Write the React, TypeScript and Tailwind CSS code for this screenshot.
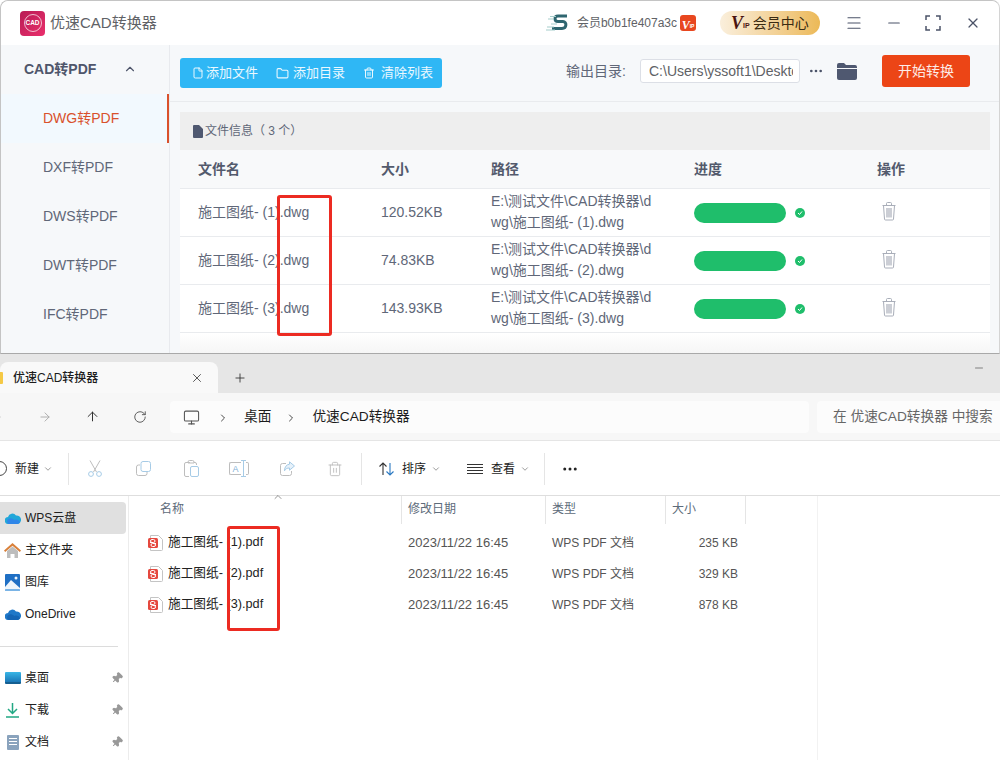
import {
  ArrowLeft, ArrowRight, ArrowUp, ChevronDown, ChevronRight, ChevronUp, Ellipsis, Folder, File, Menu, Minus, Monitor,
  Pin, Plus, RotateCw, Trash2, X,
} from "lucide-react";

const FONT = "font-['Liberation_Sans','Noto_Sans_CJK_SC',sans-serif]";

const NAV = ["DXF转PDF", "DWS转PDF", "DWT转PDF", "IFC转PDF"];

const FILES = [
  { name: "施工图纸- (1).dwg", size: "120.52KB", path: "wg\\施工图纸- (1).dwg" },
  { name: "施工图纸- (2).dwg", size: "74.83KB", path: "wg\\施工图纸- (2).dwg" },
  { name: "施工图纸- (3).dwg", size: "143.93KB", path: "wg\\施工图纸- (3).dwg" },
];

const PDFS = [
  { name: "施工图纸- (1).pdf", size: "235 KB" },
  { name: "施工图纸- (2).pdf", size: "329 KB" },
  { name: "施工图纸- (3).pdf", size: "878 KB" },
];

function CadLogo() {
  return (
    <div className="w-[25px] h-[25px] rounded-[4px] bg-gradient-to-br from-[#b81c55] to-[#ea2f6c] flex items-center justify-center shrink-0">
      <div className="w-[18px] h-[18px] rounded-full border border-white/70 flex items-center justify-center text-[6.5px] font-bold leading-none text-white">
        CAD
      </div>
    </div>
  );
}

function BrandMark() {
  return (
    <svg width="24" height="20" viewBox="0 0 24 20" className="shrink-0" fill="none">
      <path d="M21 3H12C8 3 8 8.500 12 8.500h5c4 0 4 7-1 7H6" stroke="#2f6670" strokeWidth="3" />
      <path d="M4 3.500h6M2 6h6M1 14h7M0 17h9M5 11h6" stroke="#a5cdcb" strokeWidth="1" />
    </svg>
  );
}

function TitleBar() {
  return (
    <div className="h-[44px] bg-white flex items-center pl-[19px] rounded-t-lg">
      <CadLogo />
      <span className="ml-[5px] text-[15px] text-[#606266]">优速CAD转换器</span>
      <div className="ml-auto flex items-center">
        <BrandMark />
        <span className="ml-[7px] text-xs text-[#606266]">会员b0b1fe407a3c</span>
        <div className="ml-[3px] w-4 h-4 rounded-[3px] bg-[#e8471f] text-white flex items-end justify-center leading-none">
          <span className="text-[12px] font-bold italic font-['Liberation_Serif',serif]">V</span>
          <span className="text-[5px] font-bold mb-[2px]">IP</span>
        </div>
        <div className="ml-[24px] w-[100px] h-6 rounded-full bg-gradient-to-r from-[#faefdc] to-[#ecb956] flex items-center pl-[11px] text-sm text-[#3a2a12]">
          <span className="font-['Liberation_Serif',serif] font-bold italic text-[18px] text-[#4a1410] leading-none">V</span>
          <span className="text-[7px] font-bold text-[#4a1410] mt-[6px] mr-[3px]">IP</span>
          会员中心
        </div>
        <Menu className="ml-[25px] w-[18px] h-[18px] text-[#4b5368]" strokeWidth={1.6} />
        <Minus className="ml-[22px] w-[18px] h-[18px] text-[#4b5368]" strokeWidth={1.6} />
        <svg width="16" height="16" viewBox="0 0 16 16" className="ml-[22px] text-[#4b5368]" fill="none" stroke="currentColor" strokeWidth="1.500">
          <path d="M1 5V1h4M11 1h4v4M15 11v4h-4M5 15H1v-4" />
        </svg>
        <X className="ml-[24px] mr-[18px] w-[16px] h-[16px] text-[#4b5368]" strokeWidth={1.8} />
      </div>
    </div>
  );
}

function Sidebar() {
  return (
    <aside className="w-[169px] shrink-0 bg-[#f6f8fa] border-r border-[#e8eaee]">
      <div className="h-[49px] flex items-center justify-between pl-[23px] pr-[32px] pb-[2px] text-sm font-bold text-[#4f566b]">
        CAD转PDF
        <ChevronUp className="w-[14px] h-[14px]" />
      </div>
      <div className="h-[49px] flex items-center pl-[42px] pb-[2px] text-sm text-[#d9512c] bg-[#f2f9fe] border-r-2 border-[#d9512c]">DWG转PDF</div>
      {NAV.map((n) => (
        <div key={n} className="h-[49px] flex items-center pl-[42px] pb-[2px] text-sm text-[#606778]">{n}</div>
      ))}
    </aside>
  );
}

function ToolBar() {
  return (
    <div className="h-[57px] flex items-center pl-[10px] border-b border-[#e9ebee]">
      <div className="h-[30px] w-[262px] bg-[#2fb7f5] rounded-[3px] flex items-center pl-3 text-[13px] text-white/90">
        <File className="w-3 h-3" />
        <span className="ml-[2px]">添加文件</span>
        <Folder className="ml-[18px] w-[13px] h-[13px]" />
        <span className="ml-[4px]">添加目录</span>
        <Trash2 className="ml-[18px] w-3 h-3" />
        <span className="ml-[6px]">清除列表</span>
      </div>
      <div className="ml-auto flex items-center pb-[4px]">
        <span className="text-sm text-[#606778]">输出目录:</span>
        <div className="ml-[14px] w-[160px] h-6 bg-white border border-[#dcdfe6] rounded-[3px] pl-2 flex items-center text-sm text-[#606266] whitespace-nowrap">
          <span className="w-[144px] overflow-hidden">C:\Users\yssoft1\Desktop</span>
        </div>
        <Ellipsis className="ml-[8px] w-4 h-4 text-[#4b5368]" />
        <svg width="20" height="17" viewBox="0 0 20 17" className="ml-[13px]" fill="#4f5870">
          <path d="M0 2a2 2 0 0 1 2-2h5l2 2h9a2 2 0 0 1 2 2v1H0z" />
          <path d="M0 6h20v9a2 2 0 0 1-2 2H2a2 2 0 0 1-2-2z" />
        </svg>
        <button className="ml-[25px] mr-[29px] w-[88px] h-8 bg-[#ec4516] rounded-[3px] text-sm text-white/90">开始转换</button>
      </div>
    </div>
  );
}

function TrashIcon() {
  return (
    <svg width="14" height="19" viewBox="0 0 14 19" className="ml-[5px] -mt-[2px]" fill="none" stroke="#a9aeb9" strokeWidth="1">
      <path d="M.5 3.500h13M4.500 3.500V1.500a1 1 0 0 1 1-1h3a1 1 0 0 1 1 1v2" />
      <path d="M1.500 3.500l1 13.500a1 1 0 0 0 1 1h7a1 1 0 0 0 1-1l1-13.500" />
      <path d="M5 6v9.500M7 6v9.500M9 6v9.500" strokeWidth="1.200" />
    </svg>
  );
}

function FileTable() {
  return (
    <div className="pl-[10px] pt-[10px] pr-[9px]">
      <div className="h-[38px] bg-[#eeeeee] flex items-center pl-[13px] text-xs text-[#606778]">
        <svg width="10" height="13" viewBox="0 0 10 13" fill="#4f5870"><path d="M0 1a1 1 0 0 1 1-1h5l4 4v8a1 1 0 0 1-1 1H1a1 1 0 0 1-1-1z" /></svg>
        <span className="ml-[2px]">文件信息（ 3 个）</span>
      </div>
      <div className="grid grid-cols-[183px_110px_203px_183px_1fr] h-[39px] items-center pl-[18px] bg-[#f8f9fa] border-b border-[#e9ebee] text-sm font-bold text-[#535a6c]">
        <span>文件名</span>
        <span>大小</span>
        <span>路径</span>
        <span>进度</span>
        <span>操作</span>
      </div>
      <div className="bg-white">
        {FILES.map((f) => (
          <div key={f.name} className="grid grid-cols-[183px_110px_203px_183px_1fr] h-[48px] items-center pl-[18px] border-b border-[#e9ebee] text-sm text-[#606778]">
            <span className="whitespace-nowrap pb-[2px]">{f.name}</span>
            <span className="pb-[2px]">{f.size}</span>
            <div className="leading-[21px] -mt-[1px] whitespace-nowrap">
              <div>E:\测试文件\CAD转换器\d</div>
              <div>{f.path}</div>
            </div>
            <div className="flex items-center">
              <div className="w-[92px] h-5 rounded-full bg-[#1fbe6b]" />
              <div className="ml-[9px] w-[10px] h-[10px] rounded-full bg-[#1fbe6b] flex items-center justify-center">
                <svg width="6" height="6" viewBox="0 0 6 6" fill="none" stroke="white" strokeWidth="1"><path d="M1 3l1.500 1.500L5 1.500" /></svg>
              </div>
            </div>
            <TrashIcon />
          </div>
        ))}
      </div>
      <div className="h-5 bg-gradient-to-b from-white to-[#f6f6f6]" />
    </div>
  );
}

function ConverterWindow() {
  return (
    <div className="relative h-[354px] overflow-hidden bg-white rounded-t-lg border border-b-[#a9a9a9] border-t-[#c4c4c4] border-l-[#c4c4c4] border-r-[#d4d4d4]">
      <TitleBar />
      <div className="flex bg-[#f6f8fa]">
        <Sidebar />
        <main className="flex-1">
          <ToolBar />
          <FileTable />
        </main>
      </div>
      <div className="absolute left-[276px] top-[194px] w-[55px] h-[141px] border-[3px] border-[#ec2b22] rounded-[3px]" />
    </div>
  );
}

function CmdIcon({ children }: { children: React.ReactNode }) {
  return <div className="w-[48px] flex justify-center">{children}</div>;
}

const GREY = "#bdbdbd";
const BLUE = "#a6cbe6";

function ExplorerTop() {
  return (
    <>
      <div className="h-[39px] bg-[#e6e6e6] flex items-end pr-[15px]">
        <div className="w-[218px] h-[31px] bg-[#f9f9f9] rounded-t-lg flex items-center pr-[14px] text-xs text-[#1c1c1c]">
          <div className="w-[3px] h-[12px] bg-[#f5c945] rounded-r-[1px]" />
          <span className="ml-[10px] font-medium">优速CAD转换器</span>
          <X className="ml-auto w-[14px] h-[14px] text-[#444]" strokeWidth={1.5} />
        </div>
        <Plus className="ml-[15px] mb-[8px] w-[14px] h-[14px] text-[#333]" strokeWidth={1.5} />
        <Minus className="ml-auto mb-[19px] w-[12px] h-[12px] text-[#555]" strokeWidth={1.4} />
      </div>
      <div className="h-[48px] bg-[#f7f7f7] border-b border-[#e5e5e5] flex items-center text-[#333]">
        <ArrowLeft className="-ml-[11px] w-[14px] h-[14px] text-[#aaaaaa]" strokeWidth={1.6} />
        <ArrowRight className="ml-[35px] w-[14px] h-[14px] text-[#aaaaaa]" strokeWidth={1.6} />
        <ArrowUp className="ml-[33px] w-[15px] h-[15px]" strokeWidth={1.6} />
        <RotateCw className="ml-[33px] w-[14px] h-[14px] text-[#555]" strokeWidth={1.6} />
        <div className="ml-[23px] w-[639px] h-[32px] bg-[#fcfcfc] rounded flex items-center pl-[13px] pt-[2px] text-[13.7px] text-[#1c1c1c]">
          <Monitor className="w-[17px] h-[17px] text-[#555]" strokeWidth={1.5} />
          <ChevronRight className="ml-[17px] w-[12px] h-[12px]" strokeWidth={1.6} />
          <span className="ml-[15px]">桌面</span>
          <ChevronRight className="ml-[14px] w-[12px] h-[12px]" strokeWidth={1.6} />
          <span className="ml-[15px]">优速CAD转换器</span>
        </div>
        <div className="ml-2 flex-1 h-[32px] bg-[#fcfcfc] rounded-l flex items-center pl-[16px] pt-[2px] text-[13.7px] text-[#666] whitespace-nowrap">在 优速CAD转换器 中搜索</div>
      </div>
      <div className="h-[55px] bg-white border-b border-[#dedede] flex items-center pt-[1px] text-xs text-[#1c1c1c]">
        <div className="-ml-[8px] w-[15px] h-[15px] rounded-full border border-[#444]" />
        <span className="ml-[8px]">新建</span>
        <ChevronDown className="ml-[4px] w-[10px] h-[10px] text-[#888]" />
        <div className="ml-[15px] w-px h-8 bg-[#e5e5e5]" />
        <div className="ml-[2px] flex items-center">
          <CmdIcon>
            <svg width="14" height="17" viewBox="0 0 14 17" fill="none" strokeWidth="1">
              <path d="M2 .5l6.500 11.500M12 .5 5.500 12" stroke={GREY} />
              <circle cx="3" cy="14" r="2.400" stroke={BLUE} />
              <circle cx="11" cy="14" r="2.400" stroke={BLUE} />
            </svg>
          </CmdIcon>
          <CmdIcon>
            <svg width="15" height="15" viewBox="0 0 15 15" fill="none" strokeWidth="1">
              <path d="M4 4H2.500a2 2 0 0 0-2 2v6.500a2 2 0 0 0 2 2H9a2 2 0 0 0 2-2V11" stroke={GREY} />
              <rect x="5" y=".5" width="9.500" height="10" rx="2" stroke={BLUE} />
            </svg>
          </CmdIcon>
          <CmdIcon>
            <svg width="15" height="17" viewBox="0 0 15 17" fill="none" strokeWidth="1">
              <path d="M6 2.500H2a1.500 1.500 0 0 0-1.500 1.500v11A1.500 1.500 0 0 0 2 16.500h3M10 2.500h1A1.500 1.500 0 0 1 12.500 4v1M4 3V2a1.500 1.500 0 0 1 1.500-1.500h3A1.500 1.500 0 0 1 10 2v1z" stroke={GREY} />
              <rect x="6.500" y="6.500" width="8" height="10" rx="1.500" stroke={BLUE} />
            </svg>
          </CmdIcon>
          <CmdIcon>
            <div className="flex items-center h-[17px]">
              <div className="w-[12px] h-[13px] border border-r-0 border-[#bdbdbd] rounded-l-[2px] text-[9px] leading-[12px] text-center text-[#7fb0d6]">A</div>
              <div className="w-[5px] h-[17px] border-x-0 border-y border-[#a6cbe6] relative">
                <div className="absolute left-[2px] top-0 bottom-0 w-px bg-[#a6cbe6]" />
              </div>
              <div className="w-[3px] h-[13px] border border-l-0 border-[#bdbdbd] rounded-r-[2px]" />
            </div>
          </CmdIcon>
          <CmdIcon>
            <svg width="15" height="15" viewBox="0 0 15 15" fill="none" strokeWidth="1">
              <path d="M6 2.500H2.500a2 2 0 0 0-2 2v8a2 2 0 0 0 2 2h7a2 2 0 0 0 2-2V10" stroke={GREY} />
              <path d="M9.500 .8l5 4.200-5 4.200V7c-2.500 0-4 .8-5 2.800C4.500 6 6.500 3.500 9.500 3.200z" stroke={BLUE} fill="#e6f1fa" />
            </svg>
          </CmdIcon>
          <CmdIcon><Trash2 className="w-[16px] h-[16px] text-[#bdbdbd]" strokeWidth={1.4} /></CmdIcon>
        </div>
        <div className="ml-[2px] w-px h-8 bg-[#e5e5e5]" />
        <svg width="17" height="14" viewBox="0 0 17 14" fill="none" strokeWidth="1.100" className="ml-4">
          <path d="M5 13V1M1.500 4.500 5 1l3.500 3.500" stroke="#333" />
          <path d="M12 1v12M8.500 9.500 12 13l3.500-3.500" stroke="#2b79c2" />
        </svg>
        <span className="ml-[7px]">排序</span>
        <ChevronDown className="ml-[5px] w-[10px] h-[10px] text-[#888]" />
        <svg width="16" height="10" viewBox="0 0 16 10" stroke="#333" className="ml-[26px]"><path d="M0 .5h16M0 3.500h16M0 6.500h16M0 9.500h16" /></svg>
        <span className="ml-2">查看</span>
        <ChevronDown className="ml-[5px] w-[10px] h-[10px] text-[#888]" />
        <div className="ml-[14px] w-px h-8 bg-[#e5e5e5]" />
        <Ellipsis className="ml-4 w-[18px] h-[18px] text-[#222]" strokeWidth={2} />
      </div>
    </>
  );
}

function NavItem({ label, icon, active, pinned }: { label: string; icon: React.ReactNode; active?: boolean; pinned?: boolean }) {
  return (
    <div className={`h-[32px] w-[126px] flex items-center rounded-r text-xs text-[#222] pr-[3px] ${active ? "bg-[#e0e0e0]" : ""}`}>
      <div className="w-[25px] flex justify-center shrink-0">{icon}</div>
      <span>{label}</span>
      {pinned && <Pin className="ml-auto w-[12px] h-[12px] text-[#999] fill-[#999] rotate-45" />}
    </div>
  );
}

function CloudIcon({ from, to }: { from: string; to: string }) {
  return (
    <svg width="16" height="11" viewBox="0 0 16 11">
      <path d="M3.500 11a3.500 3.500 0 0 1-.5-7A4.500 4.500 0 0 1 11 2.500 3.500 3.500 0 0 1 12.500 11z" fill={from} />
      <path d="M3.500 11a3 3 0 0 1 1-5.500c2-1 4 .5 5 1.500 2-1 5 0 5.500 2.300A3 3 0 0 1 12.500 11z" fill={to} />
    </svg>
  );
}

function ExplorerNav() {
  return (
    <aside className="w-[129px] shrink-0 border-r border-[#ececec] pt-[6px]">
      <NavItem active label="WPS云盘" icon={<CloudIcon from="#21a7d9" to="#2f86e8" />} />
      <NavItem label="主文件夹" icon={
        <svg width="17" height="15" viewBox="0 0 17 15">
          <path d="M3 8 8.500 3.500 14 8v7h-3.500v-4h-4v4H3z" fill="#bdbdbd" />
          <path d="M8.500 0 0 7.500 1.200 9l7.300-6.200L15.800 9 17 7.500z" fill="#d9803a" />
        </svg>
      } />
      <NavItem label="图库" icon={
        <svg width="15" height="17" viewBox="0 0 15 17">
          <path d="M0 1a1 1 0 0 1 1-1h13a1 1 0 0 1 1 1v14H0z" fill="#1f6fc4" />
          <path d="M0 13 6 6l9 8v1H0z" fill="#eef5fb" />
          <circle cx="11" cy="4" r="1.500" fill="#eef5fb" />
          <rect y="15" width="15" height="2" rx=".5" fill="#7ab4e6" />
        </svg>
      } />
      <NavItem label="OneDrive" icon={<CloudIcon from="#1f78c8" to="#1565b4" />} />
      <div className="mt-[16px] mb-[15px] w-[118px] h-px bg-[#dcdcdc]" />
      <NavItem pinned label="桌面" icon={<div className="w-[16px] h-[12px] rounded-[1px] bg-gradient-to-b from-[#39b6e6] to-[#1b78b8] border-b-2 border-[#155f91]" />} />
      <NavItem pinned label="下载" icon={
        <svg width="13" height="15" viewBox="0 0 13 15" fill="none" stroke="#22a884" strokeWidth="1.500">
          <path d="M6.500 0v10M2 6l4.500 4.500L11 6M0 14h13" />
        </svg>
      } />
      <NavItem pinned label="文档" icon={
        <div className="w-[12px] h-[15px] bg-[#8aa3bd] rounded-[1px] flex flex-col gap-[2px] px-[2px] pt-[3px]">
          <div className="h-px bg-white" /><div className="h-px bg-white" /><div className="h-px bg-white" />
        </div>
      } />
    </aside>
  );
}

function PdfIcon() {
  return (
    <svg width="15" height="16" viewBox="0 0 15 16" className="shrink-0">
      <path d="M2.500.5h8l4 4v10a1 1 0 0 1-1 1h-11z" fill="#fff" stroke="#c4c4c4" />
      <rect y="3" width="10" height="10" rx="1.500" fill="#e5483e" />
      <path d="M2 7.500h3.500a1.500 1.500 0 0 0 0-3H4a1.500 1.500 0 0 0 0 3M8 8.500H4.500a1.500 1.500 0 0 0 0 3H6a1.500 1.500 0 0 0 0-3" fill="none" stroke="#fff" strokeWidth="1" />
    </svg>
  );
}

function FileList() {
  return (
    <div className="relative flex-1">
      <div className="h-[28px] flex text-xs text-[#5d6b7a]">
        <div className="w-[273px] pl-[31px] leading-[27px] border-r border-[#e5e5e5]">名称</div>
        <div className="w-[144px] pl-[6px] leading-[27px] border-r border-[#e5e5e5]">修改日期</div>
        <div className="w-[120px] pl-[6px] leading-[27px] border-r border-[#e5e5e5]">类型</div>
        <div className="w-[80px] pl-[6px] leading-[27px] border-r border-[#e5e5e5]">大小</div>
      </div>
      <ChevronUp className="absolute left-[143px] -top-[5px] w-[12px] h-[12px] text-[#777]" strokeWidth={1.6} />
      <div className="pt-[3px]">
        {PDFS.map((p) => (
          <div key={p.name} className="h-[31px] flex items-center text-xs">
            <div className="w-[20px] ml-[19px]"><PdfIcon /></div>
            <span className="w-[240px] text-[12.7px] text-[#222] whitespace-nowrap">{p.name}</span>
            <span className="w-[144px] text-[13px] text-[#555]">2023/11/22 16:45</span>
            <span className="w-[120px] text-[#555]">WPS PDF 文档</span>
            <span className="w-[66px] text-right text-[#555]">{p.size}</span>
          </div>
        ))}
      </div>
      <div className="absolute left-[688px] top-0 bottom-0 w-px bg-[#f2f2f2]" />
    </div>
  );
}

function ExplorerWindow() {
  return (
    <div className="relative h-[406px] overflow-hidden bg-white">
      <ExplorerTop />
      <div className="flex h-[264px]">
        <ExplorerNav />
        <FileList />
      </div>
      <div className="absolute left-[227px] top-[172px] w-[53px] h-[105px] border-[3px] border-[#ec2b22] rounded-[3px]" />
    </div>
  );
}

export default function App() {
  return (
    <div className={`w-[1000px] h-[760px] overflow-hidden bg-white ${FONT}`}>
      <ConverterWindow />
      <ExplorerWindow />
    </div>
  );
}
